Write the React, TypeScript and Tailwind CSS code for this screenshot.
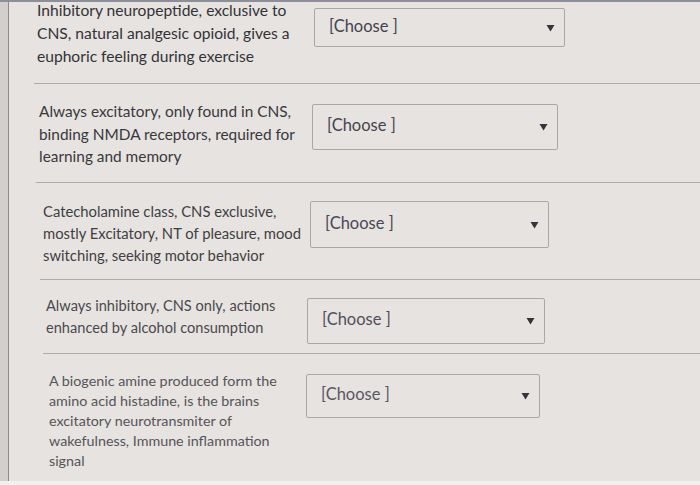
type Row = {
  lines: string[];
  rowClass: string;
  textClass: string;
  selectClass: string;
};

const rows: Row[] = [
  {
    lines: [
      'Inhibitory neuropeptide, exclusive to',
      'CNS, natural analgesic opioid, gives a',
      'euphoric feeling during exercise',
    ],
    rowClass: 'mt-[-3px] h-[85px] ml-[25px] pl-[3px]',
    textClass: 'w-[277px] text-[15.6px] leading-[23px] text-[#333336]',
    selectClass: 'mt-[9px] h-[39px] w-[251px] text-[#43434d]',
  },
  {
    lines: [
      'Always excitatory, only found in CNS,',
      'binding NMDA receptors, required for',
      'learning and memory',
    ],
    rowClass: 'h-[99px] pt-[16px] ml-[27px] pl-[3px]',
    textClass: 'w-[273px] text-[15.4px] leading-[22.5px] text-[#39393c]',
    selectClass: 'mt-[4px] h-[46px] w-[246px] text-[#45454e]',
  },
  {
    lines: [
      'Catecholamine class, CNS exclusive,',
      'mostly Excitatory, NT of pleasure, mood',
      'switching, seeking motor behavior',
    ],
    rowClass: 'h-[97px] pt-[17px] ml-[31px] pl-[3px]',
    textClass: 'w-[267px] text-[14.8px] leading-[22px] text-[#3f3f42]',
    selectClass: 'mt-[1px] h-[47px] w-[239px] text-[#484851]',
  },
  {
    lines: ['Always inhibitory, CNS only, actions', 'enhanced by alcohol consumption'],
    rowClass: 'h-[74px] pt-[15px] ml-[34px] pl-[3px]',
    textClass: 'w-[261px] text-[14.6px] leading-[22px] text-[#4a4a4d]',
    selectClass: 'mt-[3px] h-[46px] w-[238px] text-[#50505a]',
  },
  {
    lines: [
      'A biogenic amine produced form the',
      'amino acid histadine, is the brains',
      'excitatory neurotransmiter of',
      'wakefulness, Immune inflammation',
      'signal',
    ],
    rowClass: 'pt-[17px] ml-[37px] pl-[3px]',
    textClass: 'w-[257px] text-[14.3px] leading-[20px] text-[#555558]',
    selectClass: 'mt-[3px] h-[44px] w-[234px] text-[#585862]',
  },
];

function ChooseBox({ className }: { className: string }) {
  return (
    <div
      className={`flex shrink-0 items-center justify-between border border-[#a9a7a8] rounded-[2px] pl-[14px] pr-[9px] ${className}`}
    >
      <span className="text-[16.5px] leading-none mb-[3px]">[Choose ]</span>
      <svg width="9" height="8" viewBox="0 0 9 8" className="text-[#34343c]">
        <path d="M0.5 1 L8.5 1 L4.5 7.5 Z" fill="currentColor" />
      </svg>
    </div>
  );
}

export default function App() {
  return (
    <div
      className="w-[700px] h-[485px] overflow-hidden flex flex-col bg-[#e6e3e1]"
      style={{ fontFamily: 'Lato, "Open Sans", sans-serif' }}
    >
      <div className="h-[2px] shrink-0 bg-[#8c8e9a]" />
      <div className="flex flex-1 min-h-0">
        <div className="w-[9px] shrink-0 bg-[#d2cfcd] border-r border-[#8d8b8b]" />
        <div className="flex-1 min-w-0 overflow-hidden">
          {rows.map((row, i) => (
            <div
              key={i}
              className={`flex items-start ${row.rowClass} ${
                i < rows.length - 1 ? 'border-b border-[#aeacab]' : ''
              }`}
            >
              <div className={`shrink-0 ${row.textClass}`}>
                {row.lines.map((line) => (
                  <div key={line} className="whitespace-nowrap">
                    {line}
                  </div>
                ))}
              </div>
              <ChooseBox className={row.selectClass} />
            </div>
          ))}
        </div>
      </div>
      <div className="h-[4px] shrink-0 bg-[#f1f0ee]" />
    </div>
  );
}
